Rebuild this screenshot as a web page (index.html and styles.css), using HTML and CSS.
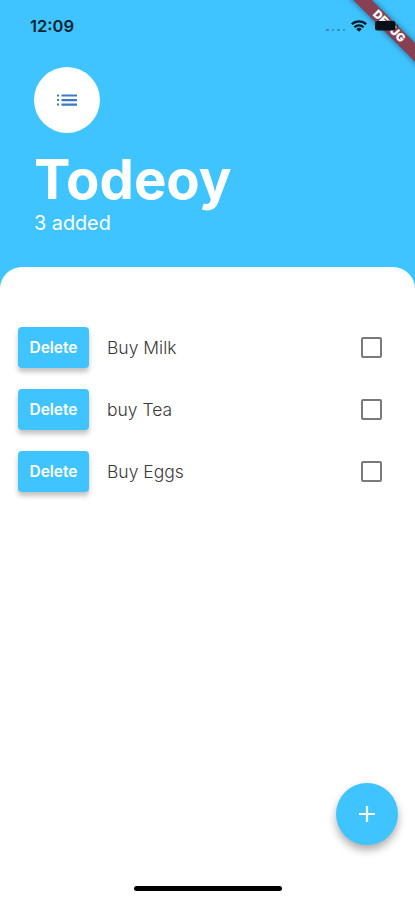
FILE: index.html
```html
<!DOCTYPE html>
<html lang="en">
<head>
<meta charset="utf-8">
<meta name="viewport" content="width=device-width, initial-scale=1">
<title>Todeoy</title>
<link rel="stylesheet" href="styles.css">
</head>
<body>
<main class="screen">
  <div class="status-bar">
    <span class="clock">12:09</span>
    <div class="indicators">
      <span class="signal"><i></i><i></i><i></i><i></i></span>
      <svg class="wifi" width="16" height="12" viewBox="0 0 16 12" fill="none" stroke="#071d29" stroke-width="2.3">
        <path d="M.8 4.3a10.2 10.2 0 0 1 14.4 0M3.4 7.2a6.5 6.5 0 0 1 9.2 0"/>
        <path d="M8 11.8 5.3 9.2a3.8 3.8 0 0 1 5.4 0z" fill="#071d29" stroke="none"/>
      </svg>
    </div>
  </div>
  <div class="ribbon-corner"><div class="ribbon">DEBUG</div></div>
  <svg class="battery" width="26" height="12" viewBox="0 0 26 12" fill="#071017">
    <rect x="1" y="1" width="20.5" height="9.5" rx="2.5"/>
    <path d="M23 4c1.6.7 1.6 3.2 0 4z" opacity=".55"/>
  </svg>
  <header class="header">
    <div class="avatar">
      <svg width="22" height="14" viewBox="0 0 22 14" fill="#3c78c8">
        <path d="M1 1.4h2v2H1zM1 6h2v2H1zM1 10.6h2v2H1zM5.5 1.4H21v2.2H5.5zM5.5 6H21v2.2H5.5zM5.5 10.6H21v2.2H5.5z"/>
      </svg>
    </div>
    <h1 class="title">Todeoy</h1>
    <p class="count">3 added</p>
  </header>
  <section class="sheet">
    <ul class="tasks">
      <li class="task"><button class="delete">Delete</button><span class="name">Buy Milk</span><span class="checkbox"></span></li>
      <li class="task"><button class="delete">Delete</button><span class="name">buy Tea</span><span class="checkbox"></span></li>
      <li class="task"><button class="delete">Delete</button><span class="name">Buy Eggs</span><span class="checkbox"></span></li>
    </ul>
  </section>
  <button class="fab" aria-label="Add task">
    <svg width="16" height="16" viewBox="0 0 16 16" stroke="#fff" stroke-width="2.2"><path d="M8 0v16M0 8h16"/></svg>
  </button>
  <div class="home-indicator"></div>
</main>
</body>
</html>
```
FILE: styles.css
```css
* { box-sizing: border-box; }
body { margin: 0; font-family: Inter, "Liberation Sans", sans-serif; }
.screen {
  position: relative;
  display: flex;
  flex-direction: column;
  width: 415px;
  height: 900px;
  overflow: hidden;
  background: #40c4ff;
}
.status-bar {
  display: flex;
  justify-content: space-between;
  align-items: center;
  height: 52px;
  padding: 0 48px 0 30px;
}
.clock { font-size: 16.5px; font-weight: 600; color: #072433; }
.indicators { display: flex; align-items: center; gap: 6px; }
.signal { display: flex; gap: 3px; padding-top: 8px; }
.signal i { width: 2.5px; height: 2.5px; border-radius: 50%; background: #2b88b3; }
.battery { position: absolute; left: 374px; top: 20px; }
.ribbon-corner {
  position: absolute;
  top: 0;
  right: 0;
  width: 80px;
  height: 80px;
  overflow: hidden;
}
.ribbon {
  position: absolute;
  left: -6px;
  top: 20px;
  width: 120px;
  height: 13px;
  transform: rotate(45deg);
  background: #873f53;
  box-shadow: 0 0 6px rgba(0, 0, 0, .5);
  color: #fff;
  font-size: 11.5px;
  font-weight: 900;
  line-height: 13px;
  text-align: center;
}
.header { height: 215px; padding: 15px 34px 0; color: #fff; }
.avatar {
  display: flex;
  align-items: center;
  justify-content: center;
  width: 66px;
  height: 66px;
  border-radius: 50%;
  background: #fff;
}
.title {
  margin: 13px 0 0;
  font-size: 54.5px;
  line-height: 66px;
  font-weight: 700;
}
.count { margin: -1px 0 0; font-size: 19.8px; line-height: 24px; }
.sheet {
  flex: 1;
  padding: 49px 33px 0 18px;
  border-radius: 22px 22px 0 0;
  background: #fff;
}
.tasks { margin: 0; padding: 0; list-style: none; }
.task { display: flex; align-items: center; height: 62px; }
.delete {
  width: 71px;
  height: 41px;
  padding: 0;
  border: 0;
  border-radius: 4px;
  background: #40c4ff;
  box-shadow: 0 4px 5px rgba(0, 0, 0, .24);
  color: #fff;
  font: 600 15.5px Inter, sans-serif;
}
.name { flex: 1; margin-left: 18px; font-size: 17.5px; font-weight: 350; color: #3a3a3a; }
.checkbox {
  width: 21px;
  height: 21px;
  border: 2px solid #7a7a7a;
  border-radius: 2px;
}
.fab {
  position: absolute;
  left: 336px;
  top: 783px;
  display: flex;
  align-items: center;
  justify-content: center;
  width: 62px;
  height: 62px;
  padding: 0;
  border: 0;
  border-radius: 50%;
  background: #40c4ff;
  box-shadow: 0 5px 9px rgba(0, 0, 0, .32);
}
.home-indicator {
  position: absolute;
  left: 134px;
  top: 886px;
  width: 148px;
  height: 5px;
  border-radius: 3px;
  background: #000;
}
```
